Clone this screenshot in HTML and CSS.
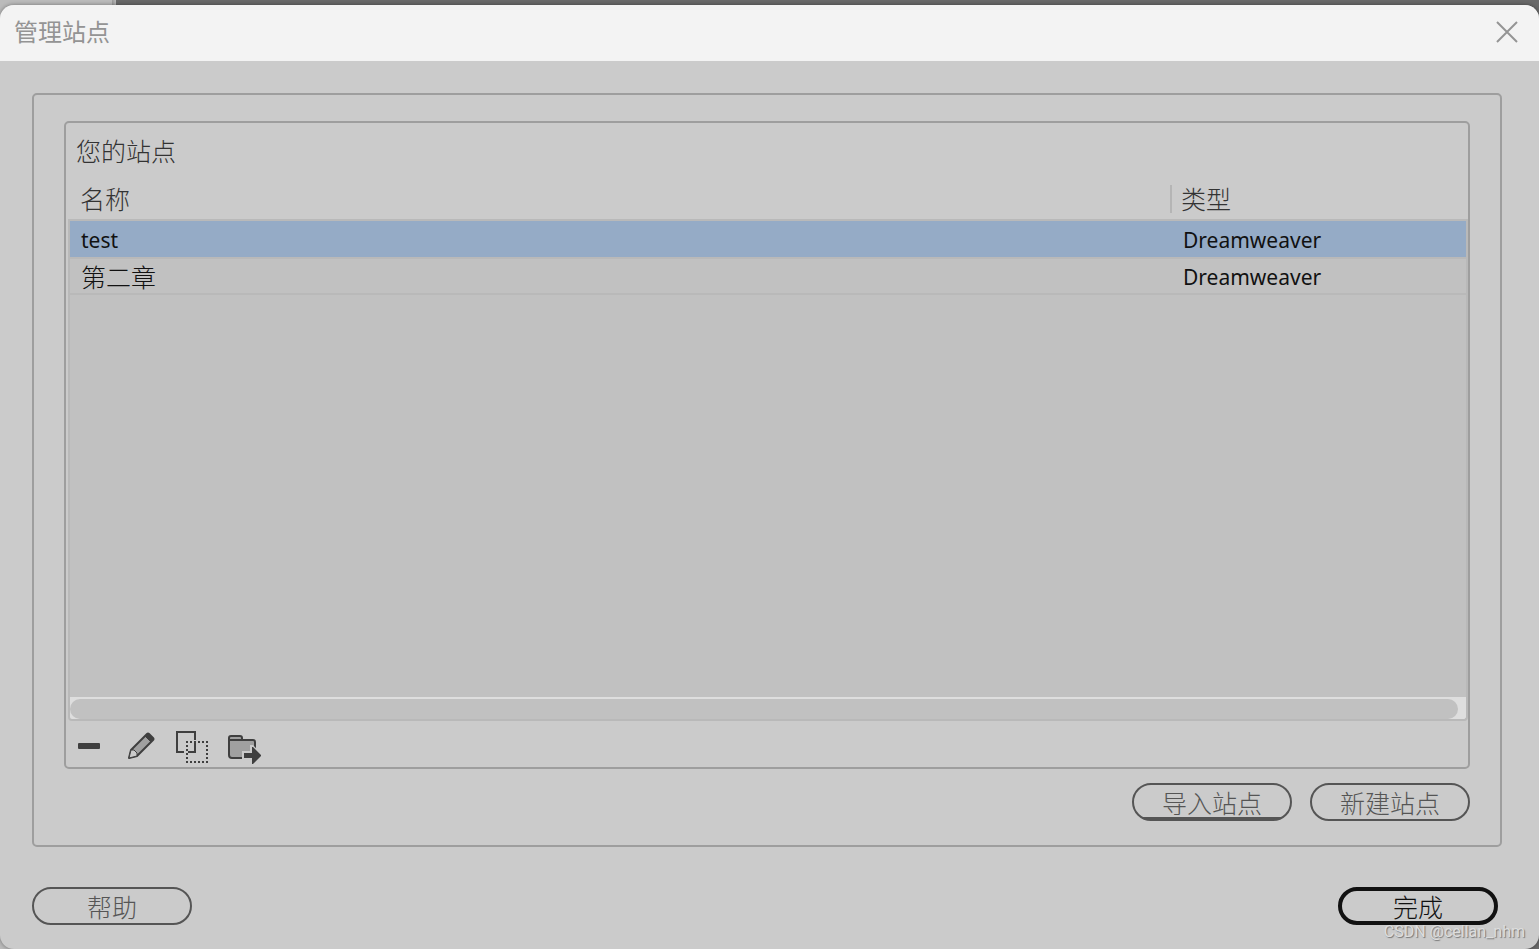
FILE: index.html
```
<!DOCTYPE html>
<html lang="zh-CN">
<head>
    <meta charset="UTF-8">
    <meta name="viewport" content="width=device-width, initial-scale=1.0">
    <title>管理站点</title>
    <link rel="stylesheet" href="styles.css">
</head>
<body>
    <div class="dialog">
        <header class="title-bar">
            <h1>管理站点</h1>
            <button type="button" class="close-btn" aria-label="关闭">
                <svg width="22" height="22" viewBox="0 0 22 22" fill="none" stroke="#949494" stroke-width="2">
                    <path d="M1 1l20 20M21 1L1 21"/>
                </svg>
            </button>
        </header>

        <main class="content">
            <section class="group">
                <div class="panel">
                    <h2>您的站点</h2>
                    <table class="site-table">
                        <thead>
                            <tr>
                                <th>名称</th>
                                <th class="type"><span>类型</span></th>
                            </tr>
                        </thead>
                        <tbody>
                            <tr class="selected">
                                <td>test</td>
                                <td class="type">Dreamweaver</td>
                            </tr>
                            <tr>
                                <td>第二章</td>
                                <td class="type">Dreamweaver</td>
                            </tr>
                        </tbody>
                    </table>
                    <div class="list-space"></div>
                    <div class="scrollbar"><div class="thumb"></div></div>
                    <div class="toolbar">
                        <button type="button" aria-label="删除站点">
                            <svg width="34" height="34" viewBox="0 0 34 34">
                                <rect x="6" y="14" width="22" height="6" rx="1" fill="#3f3f3f"/>
                            </svg>
                        </button>
                        <button type="button" aria-label="编辑站点">
                            <svg width="34" height="34" viewBox="0 0 34 34" stroke="#3f3f3f" stroke-width="2" stroke-linejoin="round">
                                <path d="M5 29l2-8L23 5q1-1 2 0l4 4q1 1 0 2L13 27z" fill="#a0a0a0"/>
                                <path d="M5 29l2-8h3l3 3v3z" fill="#cbcbcb" stroke-width="1"/>
                                <path d="M21 7l2-2q1-1 2 0l4 4q1 1 0 2l-2 2z" fill="#3f3f3f" stroke-width="1"/>
                            </svg>
                        </button>
                        <button type="button" aria-label="复制站点">
                            <svg width="34" height="34" viewBox="0 0 34 34" fill="none" stroke="#3f3f3f" stroke-width="2">
                                <path d="M8 23H1V3h18v8M19 14v9h-7"/>
                                <path d="M10 13h22M10 33h22M11 12v22M31 12v22" stroke-dasharray="2 2"/>
                            </svg>
                        </button>
                        <button type="button" aria-label="导出站点">
                            <svg width="34" height="34" viewBox="0 0 34 34" stroke="#3f3f3f" stroke-width="2">
                                <path d="M1 13V9q0-2 2-2h9q2 0 2 2v3" fill="#a0a0a0"/>
                                <path d="M1 11h24q2 0 2 2v14q0 2-2 2H4q-3 0-3-3z" fill="#a0a0a0"/>
                                <path d="M14 22h8v-6h3l9 10v1l-9 9h-3v-5h-8z" fill="#cbcbcb" stroke="none"/>
                                <path d="M16 24h8v-6h1l8 8v1l-8 8h-1v-6h-8z" fill="#3f3f3f" stroke="none"/>
                            </svg>
                        </button>
                    </div>
                </div>
                <div class="actions">
                    <button type="button" class="btn import">导入站点</button>
                    <button type="button" class="btn">新建站点</button>
                </div>
            </section>

            <footer class="footer">
                <button type="button" class="btn">帮助</button>
                <button type="button" class="btn primary">完成</button>
            </footer>
        </main>
        <span class="watermark">CSDN @cellan_nhm</span>
    </div>
</body>
</html>
```
FILE: styles.css
```
* {
    margin: 0;
    padding: 0;
    box-sizing: border-box;
}

body {
    min-height: 100vh;
    display: flex;
    padding-top: 5px;
    background: linear-gradient(to right, #bbb 112px, #999 112px, #bbb 116px, #696969 116px);
    font-family: "Noto Sans", "Noto Sans CJK SC", sans-serif;
    font-size: 21px;
    color: #111;
}

button {
    font-family: inherit;
    background: none;
    border: none;
    cursor: pointer;
}

svg {
    display: block;
    overflow: visible;
}

.dialog {
    position: relative;
    flex: 1;
    display: flex;
    flex-direction: column;
    background: #cbcbcb;
    border-radius: 14px;
    box-shadow: 0 0 4px rgba(0, 0, 0, 0.4);
    overflow: hidden;
}

.title-bar {
    display: flex;
    justify-content: space-between;
    align-items: center;
    height: 56px;
    padding: 0 21px 2px 14px;
    background: #f3f3f3;
}

.title-bar h1 {
    padding-bottom: 4px;
    font-size: 24px;
    font-weight: 400;
    color: #949494;
}

.content {
    flex: 1;
    display: flex;
    flex-direction: column;
    padding: 32px 37px 24px 32px;
}

.group {
    flex: 1;
    display: flex;
    flex-direction: column;
    padding: 26px 30px 24px;
    border: 2px solid #9e9e9e;
    border-radius: 5px;
}

.panel {
    flex: 1;
    display: flex;
    flex-direction: column;
    padding: 0 0 4px 2px;
    border: 2px solid #9e9e9e;
    border-radius: 5px;
}

.panel h2 {
    padding-left: 8px;
    font-size: 25px;
    font-weight: 300;
    line-height: 56px;
    color: #333;
}

.site-table {
    width: 100%;
    border-collapse: separate;
    border-spacing: 0;
    table-layout: fixed;
}

.site-table th {
    height: 42px;
    padding-left: 12px;
    border-bottom: 2px solid #b9b9b9;
    text-align: left;
    font-size: 25px;
    font-weight: 300;
    line-height: 28px;
    color: #333;
}

.site-table .type {
    width: 298px;
}

.site-table th.type {
    padding-left: 0;
}

.site-table th.type span {
    display: block;
    padding-left: 9px;
    border-left: 2px solid #b5b5b5;
}

.site-table td {
    height: 36px;
    padding: 2px 0 0 11px;
    background: #c1c1c1;
    border-bottom: 2px solid #b9b9b9;
    line-height: 28px;
}

.site-table td:first-child {
    border-left: 2px solid #b9b9b9;
}

.site-table td:last-child {
    padding-left: 13px;
    border-right: 2px solid #b9b9b9;
}

.site-table .selected td {
    height: 38px;
    background: #95abc6;
}

.site-table tr:not(.selected) td:first-child {
    font-size: 25px;
    font-weight: 300;
}

.list-space {
    flex: 1;
    background: #c1c1c1;
    border: solid #b9b9b9;
    border-width: 0 2px;
}

.scrollbar {
    height: 24px;
    padding: 2px 8px 0 0;
    background: #dedede;
    border: 2px solid #b9b9b9;
    border-top: none;
    border-radius: 0 0 4px 4px;
}

.thumb {
    height: 20px;
    background: #c1c1c1;
    border-radius: 10px;
}

.toolbar {
    display: flex;
    gap: 18px;
    padding: 8px 4px 0;
}

.actions {
    display: flex;
    justify-content: flex-end;
    gap: 18px;
    margin-top: 14px;
}

.btn {
    width: 160px;
    height: 38px;
    padding-top: 2px;
    border: 2px solid #555;
    border-radius: 19px;
    font-size: 25px;
    font-weight: 300;
    line-height: 28px;
    color: #555;
}

.import {
    background: linear-gradient(#555, #555) bottom / 100% 2px no-repeat;
}

.primary {
    border: 4px solid #111;
    color: #111;
}

.footer {
    display: flex;
    justify-content: space-between;
    margin-top: 40px;
    padding-right: 4px;
}

.watermark {
    position: absolute;
    right: 14px;
    bottom: 7px;
    font-family: Roboto, "Liberation Sans", sans-serif;
    font-size: 16px;
    line-height: 20px;
    color: #ddd;
    text-shadow: 1px 1px 1px #777;
}
```
